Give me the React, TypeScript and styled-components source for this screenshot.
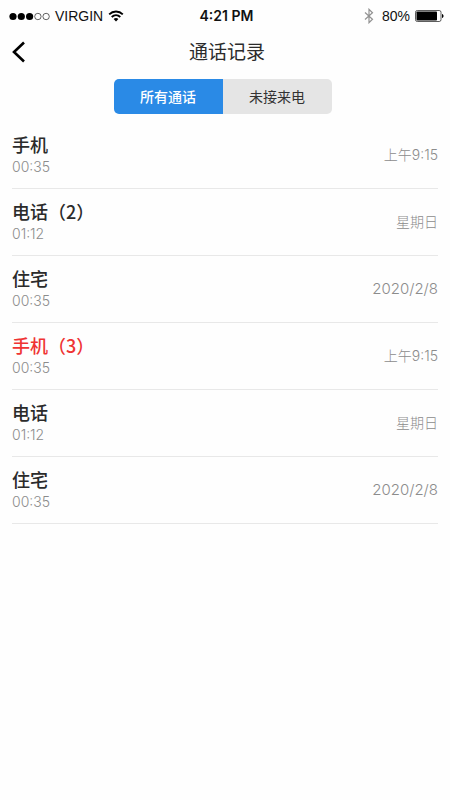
import React, { useState } from "react";
import styled, { createGlobalStyle } from "styled-components";

const GlobalStyle = createGlobalStyle`
  * { box-sizing: border-box; }
  body {
    margin: 0;
    background: #fefefe;
    color: #2b2b2b;
    font-family: Inter, "Noto Sans CJK SC", sans-serif;
  }
  button { font: inherit; border: 0; padding: 0; background: none; cursor: pointer; }
`;

const Screen = styled.main`
  min-height: 100vh;
`;

const StatusBar = styled.div`
  display: grid;
  grid-template-columns: 1fr auto 1fr;
  align-items: center;
  height: 32px;
  padding: 0 6px 0 9px;
  color: #111;
  font-family: "Liberation Sans", sans-serif;
  font-size: 14px;
  line-height: 16px;
`;

const StatusGroup = styled.div<{ $end?: boolean }>`
  display: flex;
  align-items: center;
  justify-content: ${(p) => (p.$end ? "flex-end" : "flex-start")};
  gap: 5px;
`;

const Clock = styled.time`
  font-family: Inter, sans-serif;
  font-size: 14px;
  font-weight: 600;
`;

const Header = styled.header`
  display: grid;
  grid-template-columns: 40px 1fr 36px;
  align-items: center;
  height: 40px;
`;

const BackButton = styled.button`
  display: flex;
  align-items: center;
  height: 40px;
  padding-left: 11px;
  color: #000;
`;

const Title = styled.h1`
  margin: 0;
  padding-top: 2px;
  text-align: center;
  font-size: 19px;
  line-height: 28px;
  font-weight: 400;
`;

const TabBar = styled.div`
  display: flex;
  justify-content: center;
  padding: 7px 5px 0 0;
`;

const Tabs = styled.div`
  display: grid;
  grid-template-columns: 1fr 1fr;
  width: 218px;
  height: 35px;
  border-radius: 5px;
  overflow: hidden;
`;

const Tab = styled.button<{ $active: boolean }>`
  && {
    background: ${(p) => (p.$active ? "#2a8ae6" : "#e5e5e5")};
    color: ${(p) => (p.$active ? "#fff" : "#333")};
    font-size: 14px;
    line-height: 20px;
    font-weight: ${(p) => (p.$active ? 500 : 400)};
  }
`;

const CallList = styled.ul`
  list-style: none;
  margin: 8px 0 0;
  padding: 0 12px;
`;

const CallRow = styled.li`
  display: flex;
  align-items: center;
  justify-content: space-between;
  padding: 10px 0;
  border-bottom: 1px solid #e8e8e8;
`;

const CallInfo = styled.div`
  display: flex;
  flex-direction: column;
`;

const CallName = styled.span<{ $missed: boolean }>`
  color: ${(p) => (p.$missed ? "#ef3434" : "#2b2b2b")};
  font-family: "Noto Sans CJK SC", sans-serif;
  font-size: 18px;
  line-height: 24px;
  font-weight: 500;
`;

const Duration = styled.span`
  color: #8c8c8c;
  font-size: 14px;
  line-height: 22px;
  font-weight: 300;
`;

const CallDate = styled.time<{ $numeric: boolean }>`
  color: #8c8c8c;
  font-size: ${(p) => (p.$numeric ? 15 : 14)}px;
  line-height: 20px;
  font-weight: 300;
`;

const SignalIcon = () => (
  <svg width="41" height="9" viewBox="0 0 41 9" aria-label="信号">
    {[4, 12.3, 20.6].map((x) => <circle key={x} cx={x} cy="4.5" r="3.6" fill="#000" />)}
    {[28.9, 37.1].map((x) => (
      <circle key={x} cx={x} cy="4.5" r="3.2" fill="none" stroke="#222" strokeWidth="0.7" />
    ))}
  </svg>
);

const WifiIcon = () => (
  <svg width="16" height="12" viewBox="0 0 16 12" fill="none" stroke="#000" strokeWidth="1.9" aria-label="Wi-Fi">
    <path d="M1.2 4.3C5 .5 11 .5 14.8 4.3" />
    <path d="M3.7 7C6.2 4.7 9.8 4.7 12.3 7" />
    <path d="M8 11.4 5.6 9C7 7.8 9 7.8 10.4 9Z" fill="#000" stroke="none" />
  </svg>
);

const BluetoothIcon = () => (
  <svg width="13" height="16" viewBox="0 0 13 16" fill="none" stroke="#929292" strokeWidth="1.2" aria-label="蓝牙">
    <path d="M1 4.5 8.5 11.3 5 14.7V1.3L8.5 4.7 1 11.5" />
  </svg>
);

const BatteryIcon = () => (
  <svg width="29" height="12" viewBox="0 0 29 12" aria-label="电池">
    <rect x="0.5" y="0.5" width="25.5" height="11" rx="1.8" fill="#fff" stroke="#333" strokeWidth="0.8" />
    <rect x="1.5" y="1.5" width="20.5" height="9" rx="0.8" fill="#000" />
    <path d="M27 4C29 4.2 29 7.8 27 8Z" fill="#000" />
  </svg>
);

const BackIcon = () => (
  <svg width="15" height="22" viewBox="0 0 15 22" fill="none" stroke="#000" strokeWidth="2.6" aria-hidden="true">
    <path d="M13 1.5 3 11 13 20.5" />
  </svg>
);

const calls = [
  { name: "手机", duration: "00:35", date: "上午9:15", missed: false },
  { name: "电话（2）", duration: "01:12", date: "星期日", missed: false },
  { name: "住宅", duration: "00:35", date: "2020/2/8", missed: false },
  { name: "手机（3）", duration: "00:35", date: "上午9:15", missed: true },
  { name: "电话", duration: "01:12", date: "星期日", missed: false },
  { name: "住宅", duration: "00:35", date: "2020/2/8", missed: false },
];

const tabs = ["所有通话", "未接来电"];

export default function App() {
  const [active, setActive] = useState(0);
  const shown = active === 0 ? calls : calls.filter((c) => c.missed);
  return (
    <Screen lang="zh-CN">
      <GlobalStyle />
      <StatusBar>
        <StatusGroup>
          <SignalIcon />
          <span>VIRGIN</span>
          <WifiIcon />
        </StatusGroup>
        <Clock>4:21 PM</Clock>
        <StatusGroup $end>
          <BluetoothIcon />
          <span>80%</span>
          <BatteryIcon />
        </StatusGroup>
      </StatusBar>
      <Header>
        <BackButton type="button" aria-label="返回"><BackIcon /></BackButton>
        <Title>通话记录</Title>
      </Header>
      <TabBar>
        <Tabs role="tablist">
          {tabs.map((label, i) => (
            <Tab key={label} type="button" role="tab" aria-selected={i === active} $active={i === active} onClick={() => setActive(i)}>
              {label}
            </Tab>
          ))}
        </Tabs>
      </TabBar>
      <CallList>
        {shown.map((call, i) => (
          <CallRow key={i}>
            <CallInfo>
              <CallName $missed={call.missed}>{call.name}</CallName>
              <Duration>{call.duration}</Duration>
            </CallInfo>
            <CallDate $numeric={call.date.includes("/")}>{call.date}</CallDate>
          </CallRow>
        ))}
      </CallList>
    </Screen>
  );
}
